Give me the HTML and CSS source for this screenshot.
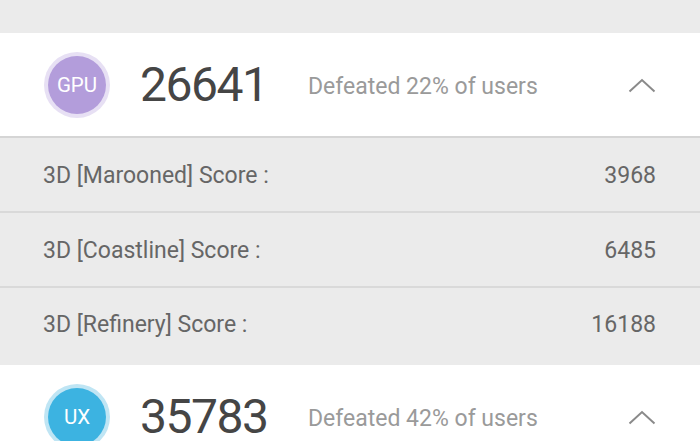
FILE: index.html
```html
<!DOCTYPE html>
<html>
<head>
<meta charset="utf-8">
<link rel="stylesheet" href="styles.css">
</head>
<body>
<div class="top-gap"></div>
<section class="card">
  <div class="header">
    <div class="badge badge-gpu"><span>GPU</span></div>
    <div class="score">26641</div>
    <div class="desc">Defeated 22% of users</div>
    <svg class="chev" width="28" height="15" viewBox="0 0 28 15"><polyline points="1.5,13.5 14,2 26.5,13.5" fill="none" stroke="#8a8a8a" stroke-width="2"/></svg>
  </div>
  <div class="rows">
    <div class="row"><span class="label">3D [Marooned] Score :</span><span class="val">3968</span></div>
    <div class="row"><span class="label">3D [Coastline] Score :</span><span class="val">6485</span></div>
    <div class="row"><span class="label">3D [Refinery] Score :</span><span class="val">16188</span></div>
  </div>
</section>
<section class="card">
  <div class="header">
    <div class="badge badge-ux"><span>UX</span></div>
    <div class="score">35783</div>
    <div class="desc">Defeated 42% of users</div>
    <svg class="chev" width="28" height="15" viewBox="0 0 28 15"><polyline points="1.5,13.5 14,2 26.5,13.5" fill="none" stroke="#8a8a8a" stroke-width="2"/></svg>
  </div>
</section>
</body>
</html>
```
FILE: styles.css
```css
html, body {
  margin: 0;
  padding: 0;
  background: #ebebeb;
  font-family: Roboto, "Liberation Sans", sans-serif;
  overflow: hidden;
  height: 441px;
}
.top-gap {
  height: 33px;
}
.header {
  background: #ffffff;
  height: 103px;
  box-sizing: border-box;
  display: flex;
  align-items: center;
  padding: 1px 44px 0 44px;
  border-bottom: 2px solid #d5d5d5;
  height: 105px;
}
.badge {
  width: 66px;
  height: 66px;
  border-radius: 50%;
  display: flex;
  align-items: center;
  justify-content: center;
  box-sizing: border-box;
  flex: none;
}
.badge span {
  width: 58px;
  height: 58px;
  border-radius: 50%;
  display: flex;
  align-items: center;
  justify-content: center;
  color: #ffffff;
  font-size: 20.5px;
}
.badge-gpu { background: #e7e0f4; }
.badge-gpu span { background: #b39ddb; }
.badge-ux { background: #bfe5f4; }
.badge-ux span { background: #3cb3e1; }
.score {
  width: 168px;
  margin-left: 30px;
  font-size: 48px;
  color: #454545;
  letter-spacing: -1.5px;
  line-height: 1;
}
.desc {
  font-size: 23px;
  color: #9a9a9a;
  padding-top: 2px;
}
.chev {
  margin-left: auto;
  margin-right: 0;
  display: block;
}
.rows {
  background: #ebebeb;
}
.row {
  display: flex;
  justify-content: space-between;
  align-items: center;
  box-sizing: border-box;
  height: 75px;
  padding: 2px 44px 0 43px;
  border-bottom: 2px solid #d9d9d9;
  font-size: 23px;
  color: #666666;
}
.row:last-child {
  border-bottom: none;
  height: 77px;
  padding: 0 44px 5px 43px;
}
```
